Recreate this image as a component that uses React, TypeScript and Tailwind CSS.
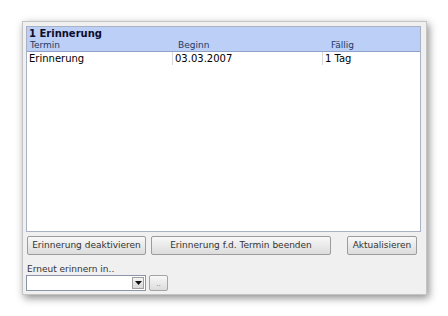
const btn =
  'h-[19px] border border-[#9c9c9c] rounded-[2px] bg-gradient-to-b from-[#f8f8f8] to-[#dcdcdc] text-[9px] text-[#333] leading-none flex items-center justify-center';

export default function App() {
  return (
    <div
      className="w-[448px] h-[316px] bg-white pt-[21px] pl-[22px]"
      style={{ fontFamily: '"DejaVu Sans", Verdana, sans-serif' }}
    >
      <div className="w-[405px] h-[274px] border border-[#c4c4c4] bg-[#f0f0f0] shadow-[2px_3px_8px_rgba(0,0,0,0.45)] pt-[4px] pl-[3px] pr-[5px] flex flex-col">
        {/* Liste */}
        <div className="h-[206px] border border-[#a8b2c4] bg-white flex flex-col">
          <div className="h-[13px] bg-[#bccff7] pl-[2px] text-[10px] font-bold leading-[13px] text-[#0c0c2c]">
            1 Erinnerung
          </div>
          <div className="h-[12px] bg-[#bccff7] border-b border-[#8fa3c9] flex text-[9px] leading-[10px] text-[#223a66]">
            <div className="w-[146px] pl-[3px]">Termin</div>
            <div className="w-[150px] pl-[5px]">Beginn</div>
            <div className="flex-1 pl-[8px]">Fällig</div>
          </div>
          <div className="h-[13px] flex text-[10px] leading-[13px] text-black">
            <div className="w-[146px] pl-[2px] border-r border-[#d8d8d8]">Erinnerung</div>
            <div className="w-[150px] pl-[2px] border-r border-[#d8d8d8]">03.03.2007</div>
            <div className="flex-1 pl-[2px]">1 Tag</div>
          </div>
        </div>

        {/* Knöpfe */}
        <div className="mt-[4px] flex pl-[1px]">
          <button className={`${btn} w-[119px]`}>Erinnerung deaktivieren</button>
          <button className={`${btn} w-[180px] ml-[5px]`}>Erinnerung f.d. Termin beenden</button>
          <button className={`${btn} w-[70px] ml-[16px]`}>Aktualisieren</button>
        </div>

        <div className="mt-[9px] h-[10px] pl-[1px] text-[9px] leading-[10px] text-[#333]">
          Erneut erinnern in..
        </div>

        <div className="mt-[1px] flex items-center">
          <div className="w-[120px] h-[16px] border border-[#8a96a8] bg-white flex justify-end items-center pr-[1px]">
            <div className="w-[12px] h-[12px] border border-[#a0a0a0] bg-gradient-to-b from-[#f4f4f4] to-[#d8d8d8] flex items-center justify-center">
              <svg width="7" height="4" viewBox="0 0 7 4">
                <path d="M0 0h7L3.5 4z" fill="#111" />
              </svg>
            </div>
          </div>
          <div className="ml-[3px] w-[19px] h-[16px] border border-[#a4a4a4] rounded-[2px] bg-gradient-to-b from-[#f8f8f8] to-[#dcdcdc] text-[7px] leading-none text-[#777] flex items-center justify-center pt-[3px]">
            ..
          </div>
        </div>
      </div>
    </div>
  );
}
